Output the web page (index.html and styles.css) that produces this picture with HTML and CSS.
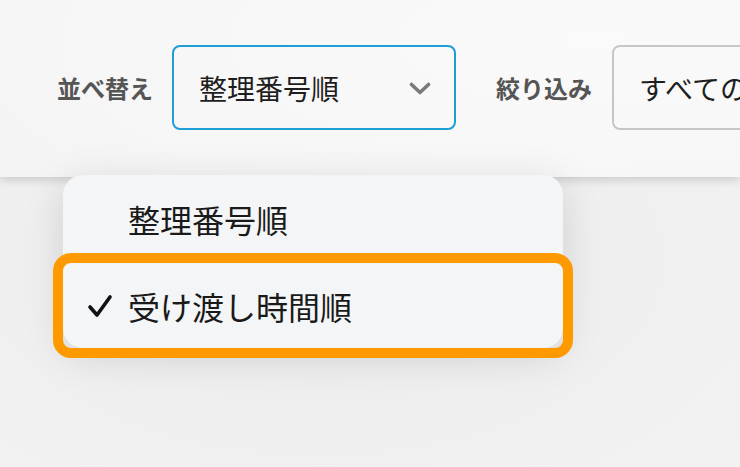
FILE: index.html
```html
<!DOCTYPE html>
<html lang="ja">
<head>
<meta charset="utf-8">
<link rel="stylesheet" href="styles.css">
</head>
<body>
<div class="toolbar">
  <span class="label label-sort">並べ替え</span>
  <div class="select select-active">
    <span class="select-text">整理番号順</span>
    <svg class="chev" width="22" height="13" viewBox="0 0 22 13"><path d="M2.5 2.5 L11 10.5 L19.5 2.5" fill="none" stroke="#7a7a7a" stroke-width="3.6" stroke-linecap="round" stroke-linejoin="round"/></svg>
  </div>
  <span class="label label-filter">絞り込み</span>
  <div class="select select-plain">
    <span class="select-text">すべての受け渡し時間</span>
  </div>
</div>
<ul class="menu">
  <li class="item"><span class="check-slot"></span><span>整理番号順</span></li>
  <li class="item selected"><span class="check-slot"><svg width="26" height="24" viewBox="0 0 26 24"><path d="M3 13 L10 21 L23 3" fill="none" stroke="#111" stroke-width="3.6" stroke-linecap="round" stroke-linejoin="round"/></svg></span><span>受け渡し時間順</span></li>
</ul>
</body>
</html>
```

FILE: styles.css
```css
html, body {
  margin: 0;
  padding: 0;
}
body {
  width: 740px;
  height: 467px;
  overflow: hidden;
  background: radial-gradient(ellipse 700px 400px at 320px 260px, #ebebeb 0%, #efefef 40%, #f4f4f4 100%);
  font-family: "Noto Sans CJK JP", "Noto Sans", sans-serif;
  position: relative;
}
.toolbar {
  box-sizing: border-box;
  height: 177px;
  padding: 45px 0 47px 57px;
  display: flex;
  align-items: center;
  background: radial-gradient(ellipse 900px 300px at 600px 40px, #fafafa 0%, #f6f6f6 60%, #f1f1f1 100%);
  box-shadow: 0 3px 9px rgba(0, 0, 0, 0.16);
  white-space: nowrap;
  position: relative;
  z-index: 1;
}
.label {
  font-size: 24px;
  font-weight: 700;
  color: #555;
  flex-shrink: 0;
}
.label-sort {
  margin-right: 19px;
}
.label-filter {
  margin-left: 40px;
  margin-right: 20px;
}
.select {
  box-sizing: border-box;
  height: 85px;
  width: 284px;
  flex-shrink: 0;
  border-radius: 8px;
  display: flex;
  align-items: center;
  justify-content: space-between;
  padding: 0 23px 0 25px;
}
.select-active {
  border: 2px solid #1d9fd6;
}
.select-plain {
  border: 2px solid #c6c6c6;
  overflow: hidden;
}
.select-text {
  font-size: 28px;
  color: #1e1e1e;
}
.chev {
  display: block;
  margin-top: 2px;
}
.menu {
  list-style: none;
  margin: 0;
  padding: 0;
  position: absolute;
  top: 175px;
  left: 63px;
  width: 500px;
  background: #f4f5f6;
  border-radius: 20px;
  box-shadow: 0 8px 40px rgba(0, 0, 0, 0.13);
  z-index: 2;
}
.item {
  height: 87px;
  display: flex;
  align-items: center;
  padding-left: 24px;
  font-size: 32px;
  color: #1a1a1a;
  position: relative;
}
.item:first-child {
  height: 88px;
}
.item.selected {
  height: 85px;
}
.check-slot {
  width: 41px;
  display: flex;
  align-items: center;
}
.check-slot svg {
  display: block;
}
.selected::after {
  content: "";
  position: absolute;
  inset: -10px;
  border: 10px solid #ff9900;
  border-radius: 18px;
}
```
